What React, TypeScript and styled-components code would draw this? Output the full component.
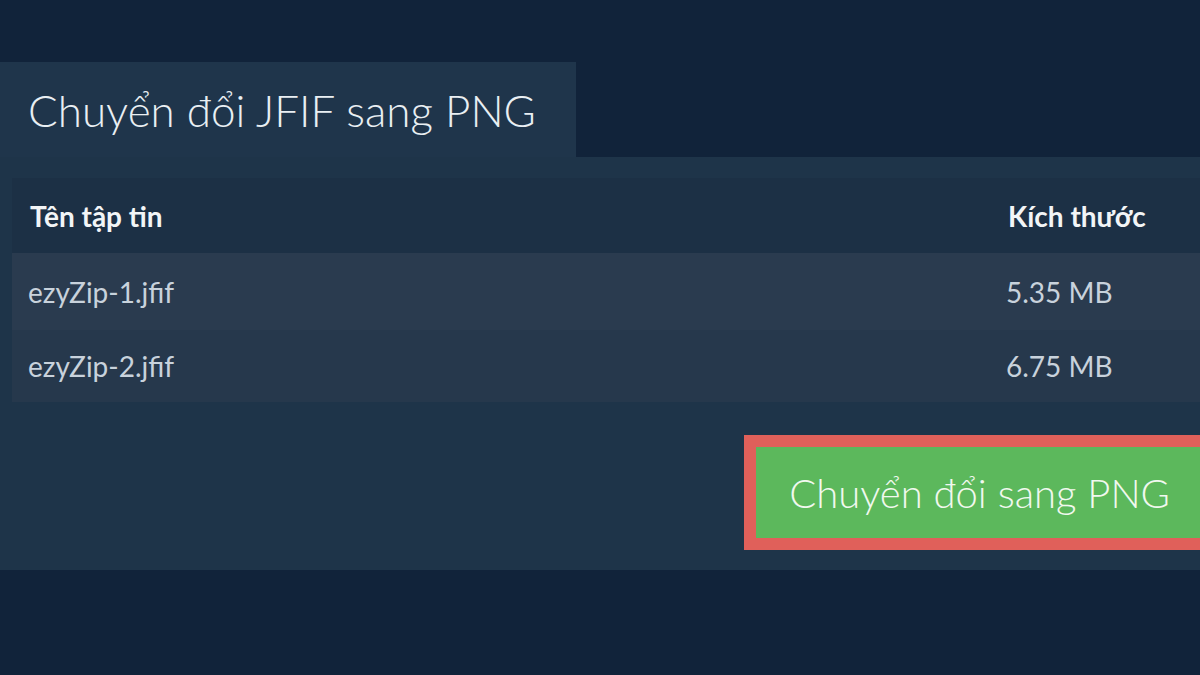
import React from 'react';
import styled, { createGlobalStyle } from 'styled-components';

const GlobalStyle = createGlobalStyle`
  html, body {
    margin: 0;
    padding: 0;
    background: #11233a;
    font-family: Lato, 'Open Sans', sans-serif;
  }
`;

const Page = styled.div`
  width: 1200px;
  height: 675px;
  padding-top: 62px;
  box-sizing: border-box;
  overflow: hidden;
`;

const TitleTab = styled.div`
  width: 576px;
  height: 95px;
  box-sizing: border-box;
  padding-left: 28px;
  display: flex;
  align-items: center;
  background: #1f354b;
`;

const Title = styled.h1`
  margin: 0;
  font-size: 44px;
  font-weight: 300;
  color: #e9eff3;
`;

const Panel = styled.div`
  background: #1e3449;
  padding: 21px 0 20px 12px;
  overflow: hidden;
`;

const Table = styled.div`
  display: flex;
  flex-direction: column;
`;

const Row = styled.div<{ $bg: string; $h: number }>`
  display: grid;
  grid-template-columns: 978px 1fr;
  height: ${(p) => p.$h}px;
  align-items: center;
  background: ${(p) => p.$bg};
`;

const Cell = styled.div<{ $head?: boolean }>`
  padding-left: ${(p) => (p.$head ? 18 : 16)}px;
  font-size: 28px;
  font-weight: ${(p) => (p.$head ? 700 : 400)};
  color: ${(p) => (p.$head ? '#f2f5f7' : '#c8d2dc')};
`;

const Actions = styled.div`
  display: flex;
  justify-content: flex-end;
  margin-top: 33px;
  margin-right: -15px;
`;

const ConvertButton = styled.button`
  height: 115px;
  padding: 0 33px;
  border: 12px solid #e0605a;
  background: #5cb85c;
  color: #f1f8ef;
  font-family: Lato, 'Open Sans', sans-serif;
  font-size: 40px;
  font-weight: 300;
  cursor: pointer;
`;

const files = [
  { name: 'ezyZip-1.jfif', size: '5.35 MB', bg: '#2a3b4f', h: 77 },
  { name: 'ezyZip-2.jfif', size: '6.75 MB', bg: '#26384c', h: 72 },
];

const App = () => (
  <>
    <GlobalStyle />
    <Page>
      <TitleTab>
        <Title>Chuyển đổi JFIF sang PNG</Title>
      </TitleTab>
      <Panel>
        <Table>
          <Row $bg="#1c3045" $h={75}>
            <Cell $head>Tên tập tin</Cell>
            <Cell $head>Kích thước</Cell>
          </Row>
          {files.map((f) => (
            <Row key={f.name} $bg={f.bg} $h={f.h}>
              <Cell>{f.name}</Cell>
              <Cell>{f.size}</Cell>
            </Row>
          ))}
        </Table>
        <Actions>
          <ConvertButton>Chuyển đổi sang PNG</ConvertButton>
        </Actions>
      </Panel>
    </Page>
  </>
);

export default App;
